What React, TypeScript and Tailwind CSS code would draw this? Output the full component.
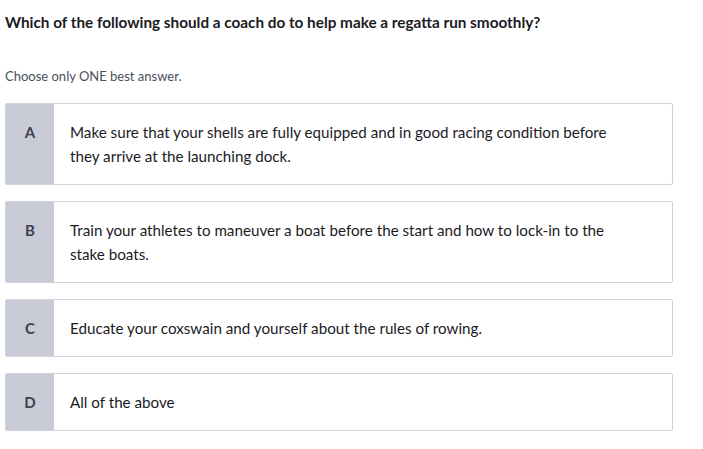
const options = [
  {
    letter: 'A',
    text: 'Make sure that your shells are fully equipped and in good racing condition before they arrive at the launching dock.',
  },
  {
    letter: 'B',
    text: 'Train your athletes to maneuver a boat before the start and how to lock-in to the stake boats.',
  },
  { letter: 'C', text: 'Educate your coxswain and yourself about the rules of rowing.' },
  { letter: 'D', text: 'All of the above' },
];

export default function App() {
  return (
    <div className="min-h-[449px] w-[703px] bg-white font-['Lato',sans-serif] text-[#1b1b1f]">
      <div className="px-[5px] pt-[12px]">
        <h1 className="text-[15.3px] font-bold leading-[20px]">
          Which of the following should a coach do to help make a regatta run smoothly?
        </h1>
        <p className="mt-[35px] text-[13px] leading-[18px] text-[#4a4f5c]">Choose only ONE best answer.</p>

        <div className="mt-[18px] flex w-[668px] flex-col gap-4">
          {options.map((o) => (
            <div key={o.letter} className="flex rounded-[2px] border border-[#d2d2dc] bg-white">
              <div className="w-[48px] shrink-0 bg-[#c9cbd7] py-4 text-center text-[15px] font-bold leading-6 text-[#3b404c]">
                {o.letter}
              </div>
              <div className="flex-1 py-4 pl-4 pr-16 text-[15.2px] leading-6 text-[#1b1b1f]">{o.text}</div>
            </div>
          ))}
        </div>
      </div>
    </div>
  );
}
